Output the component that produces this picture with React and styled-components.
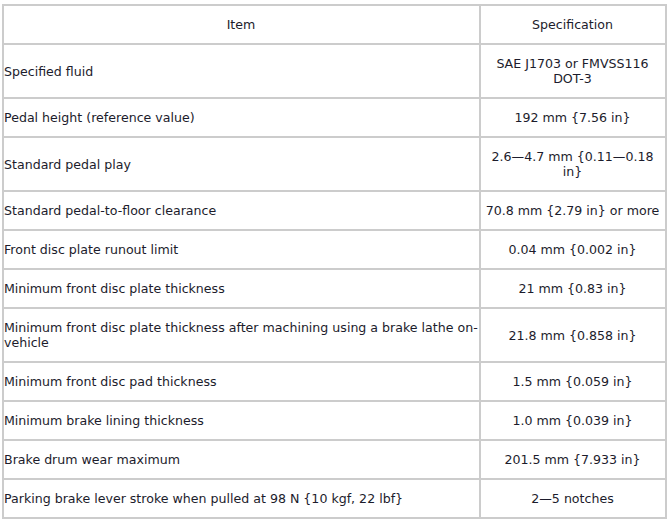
import React from 'react'
import styled, { createGlobalStyle } from 'styled-components'

const rows = [
  ['Specified fluid', 'SAE J1703 or FMVSS116 DOT-3'],
  ['Pedal height (reference value)', '192 mm {7.56 in}'],
  ['Standard pedal play', '2.6\u20144.7 mm {0.11\u20140.18 in}'],
  ['Standard pedal-to-floor clearance', '70.8 mm {2.79 in} or more'],
  ['Front disc plate runout limit', '0.04 mm {0.002 in}'],
  ['Minimum front disc plate thickness', '21 mm {0.83 in}'],
  ['Minimum front disc plate thickness after machining using a brake lathe on-vehicle', '21.8 mm {0.858 in}'],
  ['Minimum front disc pad thickness', '1.5 mm {0.059 in}'],
  ['Minimum brake lining thickness', '1.0 mm {0.039 in}'],
  ['Brake drum wear maximum', '201.5 mm {7.933 in}'],
  ['Parking brake lever stroke when pulled at 98 N {10 kgf, 22 lbf}', '2\u20145 notches'],
]

const App = () => {
  return (
    <>
      <GlobalStyle />
      <Page>
        <SpecTable>
          <Cell center>Item</Cell>
          <Cell center>Specification</Cell>
          {rows.map(([item, spec]) => (
            <React.Fragment key={item}>
              <Cell>{item}</Cell>
              <Cell center>{spec}</Cell>
            </React.Fragment>
          ))}
        </SpecTable>
      </Page>
    </>
  )
}

const GlobalStyle = createGlobalStyle`
  body {
    margin: 0;
    background: #fff;
    font-family: "DejaVu Sans", Verdana, sans-serif;
  }
`

const Page = styled.div`
  padding: 4px 1px 0 2px;
`

const SpecTable = styled.div`
  display: grid;
  grid-template-columns: 1fr 184px;
  gap: 2px;
  padding: 2px;
  background: #cccccc;
`

const Cell = styled.div`
  display: flex;
  align-items: center;
  justify-content: ${p => (p.center ? 'center' : 'flex-start')};
  text-align: ${p => (p.center ? 'center' : 'left')};
  min-height: 37px;
  padding: 11px 1px 11px 0;
  box-sizing: border-box;
  background: #fff;
  color: #1c1c2c;
  font-size: 12.6px;
  line-height: 15px;
`

export default App
